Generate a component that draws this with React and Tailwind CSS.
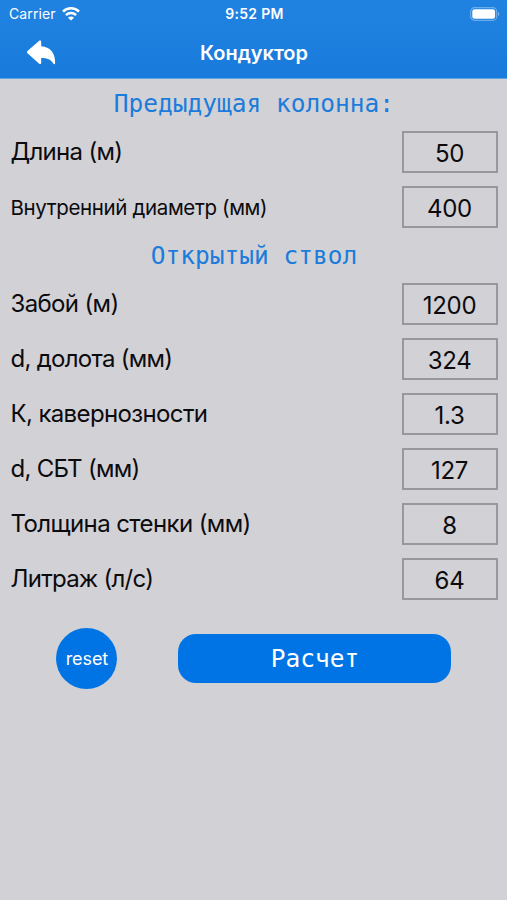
import clsx from "clsx";

const previousColumn = [
  { label: "Длина (м)", value: "50", text: "text-[24px] tracking-[-0.7px]" },
  { label: "Внутренний диаметр (мм)", value: "400", text: "pt-0.5 text-[20.5px] tracking-[-0.36px]" },
];

const openHole = [
  { label: "Забой (м)", value: "1200", text: "text-[24px] tracking-[-0.65px]" },
  { label: "d, долота (мм)", value: "324", text: "text-[24px] tracking-[-0.72px]" },
  { label: "К, кавернозности", value: "1.3", text: "text-[24px] tracking-[-0.63px]" },
  { label: "d, СБТ (мм)", value: "127", text: "text-[24px] tracking-[-0.7px]" },
  { label: "Толщина стенки (мм)", value: "8", text: "text-[24px] tracking-[-0.6px]" },
  { label: "Литраж (л/с)", value: "64", text: "text-[24px] tracking-[-0.75px]" },
];

function WifiIcon() {
  return (
    <svg className="h-[14px] w-[18px]" viewBox="0 0 18 14" fill="none" stroke="white" strokeWidth="2.5">
      <path d="M1 4.7C5.4.2 12.6.2 17 4.7" />
      <path d="M3.9 8.2C6.8 5.4 11.2 5.4 14.1 8.2" />
      <path d="M9 13.6 6 10.7C7.7 9.1 10.3 9.1 12 10.7Z" fill="white" stroke="none" />
    </svg>
  );
}

function BatteryIcon() {
  return (
    <svg className="h-[14px] w-[30px]" viewBox="0 0 30 14">
      <rect x="0.7" y="0.7" width="26" height="12.6" rx="3.8" fill="none" stroke="white" strokeOpacity="0.35" strokeWidth="1.2" />
      <rect x="2.3" y="2.3" width="22.8" height="9.4" rx="2.3" fill="white" />
      <path d="M28 4.8C29.8 5.5 29.8 8.5 28 9.2Z" fill="white" fillOpacity="0.4" />
    </svg>
  );
}

function BackIcon() {
  return (
    <svg className="h-[25px] w-[29px]" viewBox="0 0 29 25" fill="white">
      <path d="M.5 11.1 12.2.8C13.1.1 14.2.5 14.2 1.7V6.3C23.5 6.8 28.4 13.5 28.1 23.2C28.1 24.3 26.8 24.5 26.3 23.5C24 19.3 20.3 17.9 14.2 17.9V22.8C14.2 24 13.1 24.4 12.2 23.7L.5 13.3C-.2 12.6-.2 11.8.5 11.1Z" />
    </svg>
  );
}

function Header() {
  return (
    <header className="h-[79px] border-b border-[#5fa5e5] bg-linear-to-b from-[#2183e1] to-[#187adb] text-white">
      <div className="grid h-[27px] grid-cols-3 items-center pr-[7px] pl-[9px]">
        <div className="flex items-center gap-[6px]">
          <span className="text-[14px] tracking-[0.1px]">Carrier</span>
          <WifiIcon />
        </div>
        <span className="text-center text-[14px] font-semibold tracking-[0.3px]">9:52 PM</span>
        <div className="flex justify-end">
          <BatteryIcon />
        </div>
      </div>
      <div className="grid h-[51px] grid-cols-3 items-center">
        <button className="w-fit pl-[27px]" aria-label="Назад">
          <BackIcon />
        </button>
        <h1 className="pl-px text-center text-[20px] font-semibold">Кондуктор</h1>
      </div>
    </header>
  );
}

function SectionTitle({ className, children }) {
  return (
    <h2
      className={clsx(
        "flex items-center justify-center pl-px font-['DejaVu_Sans_Mono',monospace] text-[24.5px] whitespace-pre text-[#1b7cdb]",
        className,
      )}
    >
      {children}
    </h2>
  );
}

function Fields({ items }) {
  return (
    <div className="flex flex-col gap-[13px] pr-[9.5px] pl-[10.5px]">
      {items.map(({ label, value, text }) => (
        <label key={label} className="flex h-[42px] items-center justify-between">
          <span className={clsx("whitespace-nowrap", text)}>{label}</span>
          <input
            defaultValue={value}
            className="h-[42px] w-24 border-2 border-[#98989c] pt-[3px] text-center text-[24px] tracking-[-0.3px] outline-none"
          />
        </label>
      ))}
    </div>
  );
}

export default function App() {
  return (
    <div className="min-h-screen bg-[#d2d1d6] font-[Inter,sans-serif] text-[#0b0b0d]">
      <Header />
      <main>
        <SectionTitle className="h-[52px] pb-px">Предыдущая колонна:</SectionTitle>
        <Fields items={previousColumn} />
        <SectionTitle className="h-[55px] pt-0.5">Открытый ствол</SectionTitle>
        <Fields items={openHole} />
        <div className="mt-7 flex items-center gap-[61px] pl-[56.4px]">
          <button className="size-[61px] rounded-full bg-[#0074e4] text-[18px] tracking-[-0.1px] text-white">reset</button>
          <button className="h-[49px] w-[273px] rounded-[18px] bg-[#0074e4] pt-0.5 font-['DejaVu_Sans_Mono',monospace] text-[24.5px] text-white">
            Расчет
          </button>
        </div>
      </main>
    </div>
  );
}
